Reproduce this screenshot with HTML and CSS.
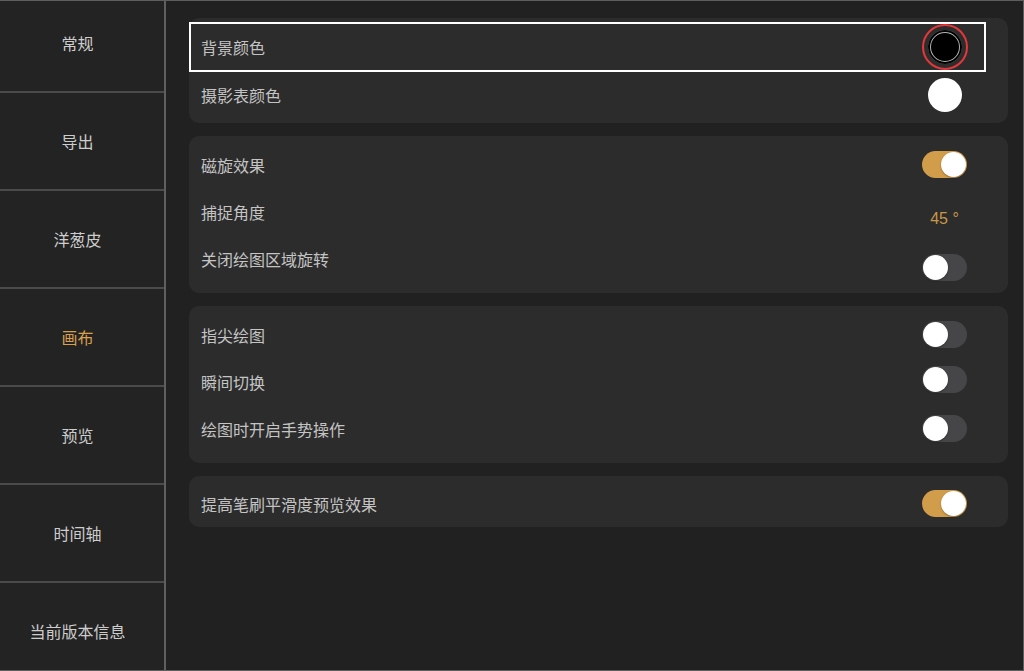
FILE: index.html
```html
<!DOCTYPE html>
<html lang="zh-CN">
<head>
<meta charset="UTF-8" />
<title>设置 - 画布</title>
<link rel="stylesheet" href="styles.css">
</head>
<body>
<div class="frame">
  <nav class="sidebar">
    <ul class="menu">
      <li>常规</li>
      <li>导出</li>
      <li>洋葱皮</li>
      <li class="active">画布</li>
      <li>预览</li>
      <li>时间轴</li>
      <li>当前版本信息</li>
    </ul>
  </nav>

  <main class="content">
    <section class="card card-colors">
      <div class="row row-focus">
        <span class="label">背景颜色</span>
        <span class="control"><span class="swatch swatch-black selected"></span></span>
      </div>
      <div class="row row-short">
        <span class="label">摄影表颜色</span>
        <span class="control"><span class="swatch swatch-white"></span></span>
      </div>
    </section>

    <section class="card">
      <div class="row">
        <span class="label">磁旋效果</span>
        <span class="control"><span class="toggle on"></span></span>
      </div>
      <div class="row">
        <span class="label">捕捉角度</span>
        <span class="control lower"><span class="value">45 °</span></span>
      </div>
      <div class="row">
        <span class="label">关闭绘图区域旋转</span>
        <span class="control lowest"><span class="toggle"></span></span>
      </div>
    </section>

    <section class="card">
      <div class="row">
        <span class="label">指尖绘图</span>
        <span class="control"><span class="toggle"></span></span>
      </div>
      <div class="row">
        <span class="label">瞬间切换</span>
        <span class="control raised"><span class="toggle"></span></span>
      </div>
      <div class="row">
        <span class="label">绘图时开启手势操作</span>
        <span class="control"><span class="toggle"></span></span>
      </div>
    </section>

    <section class="card card-single">
      <div class="row">
        <span class="label">提高笔刷平滑度预览效果</span>
        <span class="control"><span class="toggle on"></span></span>
      </div>
    </section>
  </main>
</div>
</body>
</html>
```

FILE: styles.css
```css
* {
  box-sizing: border-box;
}
html, body {
  margin: 0;
  padding: 0;
  background: #212121;
}
body {
  font-family: "Noto Sans CJK SC", "Noto Sans", sans-serif;
  font-size: 16px;
  color: #c4c4c4;
}
.frame {
  display: flex;
  width: 1024px;
  height: 671px;
  border-top: 1px solid #5e5e5e;
  border-right: 1px solid #5e5e5e;
  border-bottom: 1px solid #5e5e5e;
  overflow: hidden;
}

/* 左侧菜单 */
.sidebar {
  width: 166px;
  flex-shrink: 0;
  background: #232323;
  border-right: 2px solid #5f5f5f;
  overflow: hidden;
}
.menu {
  list-style: none;
  margin: -6px 0 0;
  padding: 0;
}
.menu li {
  height: 98px;
  display: flex;
  align-items: center;
  justify-content: center;
  padding-right: 9px;
  border-bottom: 2px solid #4b4b4b;
  color: #cdcdcd;
  font-size: 16px;
}
.menu li.active {
  color: #d9a04c;
}

/* 右侧设置 */
.content {
  flex: 1;
  display: flex;
  flex-direction: column;
  gap: 13px;
  padding: 17px 15px 0 23px;
  background: #212121;
}
.card {
  background: #2c2c2c;
  border-radius: 10px;
  padding: 5px 0 11px;
}
.card-colors {
  padding: 4px 0 6px;
}
.card-single {
  padding: 4px 0 0;
}
.row {
  height: 47px;
  display: flex;
  align-items: center;
  justify-content: space-between;
  padding-left: 12px;
}
.row-short {
  height: 45px;
}
.row-focus {
  height: 50px;
  position: relative;
}
.row-focus::after {
  content: "";
  position: absolute;
  top: 0;
  left: 0;
  right: 22px;
  bottom: 0;
  border: 2px solid #ffffff;
  pointer-events: none;
}
.label {
  line-height: 1;
}
.control {
  width: 61px;
  margin-right: 33px;
  display: flex;
  justify-content: center;
}
.control.lower {
  margin-top: 14px;
}
.control.lowest {
  margin-top: 18px;
}
.control.raised {
  margin-top: -5px;
}

.swatch {
  width: 34px;
  height: 34px;
  border-radius: 50%;
  display: block;
}
.swatch-black {
  background: #000;
  box-shadow: inset 0 0 0 2px #000, inset 0 0 0 3px #b4b4b4;
}
.swatch-white {
  background: #fff;
}
.swatch.selected {
  outline: 2px solid #e3373a;
  outline-offset: 4px;
}

.toggle {
  width: 45px;
  height: 27px;
  border-radius: 14px;
  background: #464648;
  position: relative;
  display: block;
}
.toggle::after {
  content: "";
  position: absolute;
  top: 1px;
  left: 1px;
  width: 25px;
  height: 25px;
  border-radius: 50%;
  background: #fff;
  box-shadow: 0 1px 2px rgb(0 0 0 / 0.3);
}
.toggle.on {
  background: #d29d4b;
}
.toggle.on::after {
  left: 19px;
}

.value {
  color: #c99748;
  font-family: "Liberation Sans", "Noto Sans", sans-serif;
  font-size: 16px;
}
```
